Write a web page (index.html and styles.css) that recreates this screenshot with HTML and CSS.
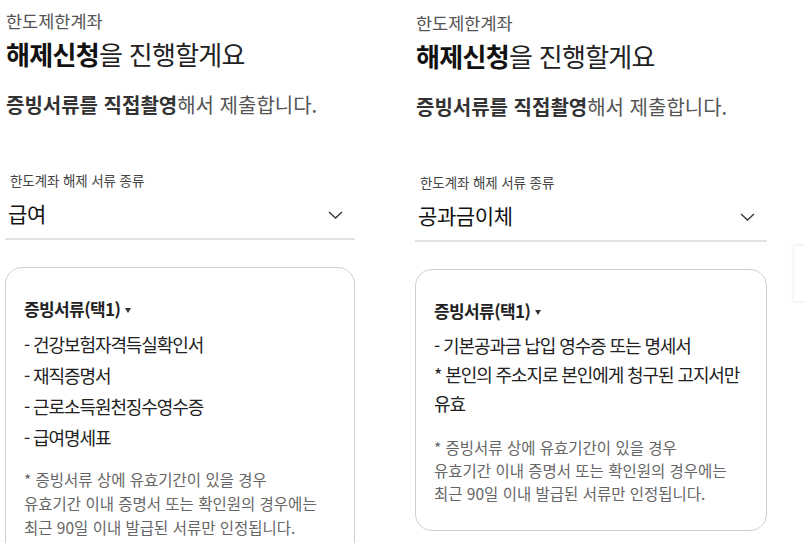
FILE: index.html
```html
<!DOCTYPE html>
<html lang="ko">
<head>
<meta charset="utf-8">
<title>해제신청</title>
<link rel="stylesheet" href="styles.css">
</head>
<body>
<div class="canvas">
  <section class="screen screen-left">
    <p class="eyebrow">한도제한계좌</p>
    <h1 class="title"><b>해제신청</b>을 진행할게요</h1>
    <p class="sub"><b>증빙서류를 직접촬영</b>해서 제출합니다.</p>
    <p class="label">한도계좌 해제 서류 종류</p>
    <div class="select">
      <span class="select-value">급여</span>
      <svg class="chev" width="15" height="8" viewBox="0 0 15 8"><polyline points="1,1 7.5,7 14,1" fill="none" stroke="#333" stroke-width="1.3"/></svg>
    </div>
    <div class="card">
      <p class="card-head">증빙서류(택1)<span class="tri"></span></p>
      <ul class="items">
        <li>- 건강보험자격득실확인서</li>
        <li>- 재직증명서</li>
        <li>- 근로소득원천징수영수증</li>
        <li>- 급여명세표</li>
      </ul>
      <p class="note">* 증빙서류 상에 유효기간이 있을 경우<br>유효기간 이내 증명서 또는 확인원의 경우에는<br>최근 90일 이내 발급된 서류만 인정됩니다.</p>
    </div>
  </section>
  <section class="screen screen-right">
    <p class="eyebrow">한도제한계좌</p>
    <h1 class="title"><b>해제신청</b>을 진행할게요</h1>
    <p class="sub"><b>증빙서류를 직접촬영</b>해서 제출합니다.</p>
    <p class="label">한도계좌 해제 서류 종류</p>
    <div class="select">
      <span class="select-value">공과금이체</span>
      <svg class="chev" width="15" height="8" viewBox="0 0 15 8"><polyline points="1,1 7.5,7 14,1" fill="none" stroke="#333" stroke-width="1.3"/></svg>
    </div>
    <div class="card card-right">
      <p class="card-head">증빙서류(택1)<span class="tri"></span></p>
      <ul class="items items-right">
        <li>- 기본공과금 납입 영수증 또는 명세서</li>
        <li>* 본인의 주소지로 본인에게 청구된 고지서만<br>유효</li>
      </ul>
      <p class="note note-right">* 증빙서류 상에 유효기간이 있을 경우<br>유효기간 이내 증명서 또는 확인원의 경우에는<br>최근 90일 이내 발급된 서류만 인정됩니다.</p>
    </div>
  </section>
  <div class="peek"></div>
</div>
</body>
</html>
```
FILE: styles.css
```css
html, body {
  margin: 0;
  padding: 0;
  background: #fff;
  overflow: hidden;
}
body {
  width: 805px;
  height: 552px;
  font-family: "Noto Sans CJK KR", "Noto Sans", sans-serif;
  color: #222;
}
p, h1, ul { margin: 0; padding: 0; }
.canvas {
  display: flex;
  align-items: flex-start;
}
.screen {
  flex: none;
  width: 350px;
  display: flex;
  flex-direction: column;
}
.screen-left {
  margin-left: 5px;
  height: 543px;
  overflow: hidden;
}
.screen-right {
  margin-left: 60px;
  width: 352px;
  padding-top: 2px;
}
.eyebrow {
  margin-top: 10px;
  padding-left: 1px;
  font-size: 17.5px;
  line-height: 22px;
  letter-spacing: 0;
  color: #555;
}
.title {
  margin-top: 5px;
  padding-left: 1px;
  font-size: 26px;
  line-height: 34px;
  font-weight: 400;
  letter-spacing: -0.7px;
  color: #222;
}
.title b { font-weight: 700; color: #111; }
.sub {
  margin-top: 21px;
  padding-left: 1px;
  font-size: 20px;
  line-height: 26px;
  letter-spacing: 0;
  color: #555;
}
.sub b { font-weight: 700; color: #333; }
.label {
  margin-top: 53px;
  padding-left: 5px;
  font-size: 13.5px;
  line-height: 18px;
  letter-spacing: -0.1px;
  color: #444;
}
.select {
  margin-top: 10px;
  display: flex;
  justify-content: space-between;
  align-items: center;
  padding: 0 12px 11px 3px;
  border-bottom: 2px solid #e2e2e2;
}
.select-value {
  font-size: 21px;
  line-height: 28px;
  letter-spacing: -0.4px;
  color: #111;
}
.chev { margin-top: 4px; }
.card {
  margin-top: 27px;
  border: 1px solid #cfcfcf;
  border-radius: 17px;
  padding: 29px 18px 25px 18px;
}
.card-head {
  font-size: 17px;
  line-height: 24px;
  font-weight: 700;
  letter-spacing: -0.6px;
  color: #222;
  display: flex;
  align-items: center;
}
.tri {
  display: inline-block;
  width: 0;
  height: 0;
  margin-left: 5px;
  margin-top: 2px;
  border-left: 3px solid transparent;
  border-right: 3px solid transparent;
  border-top: 5px solid #333;
}
.items {
  list-style: none;
  margin-top: 8px;
}
.items li {
  font-size: 18px;
  line-height: 31px;
  letter-spacing: -1.1px;
  color: #222;
}
.items-right li { line-height: 29px; }
.note {
  margin-top: 14px;
  font-size: 15.5px;
  line-height: 24px;
  letter-spacing: 0;
  color: #666;
}
.note-right {
  margin-top: 18px;
  line-height: 23px;
}
.peek {
  flex: none;
  margin-left: 26px;
  margin-top: 245px;
  width: 20px;
  height: 55px;
  background: #fff;
  border: 1px solid #f0f0f0;
  box-shadow: 0 0 3px rgba(0,0,0,0.06);
}
```
